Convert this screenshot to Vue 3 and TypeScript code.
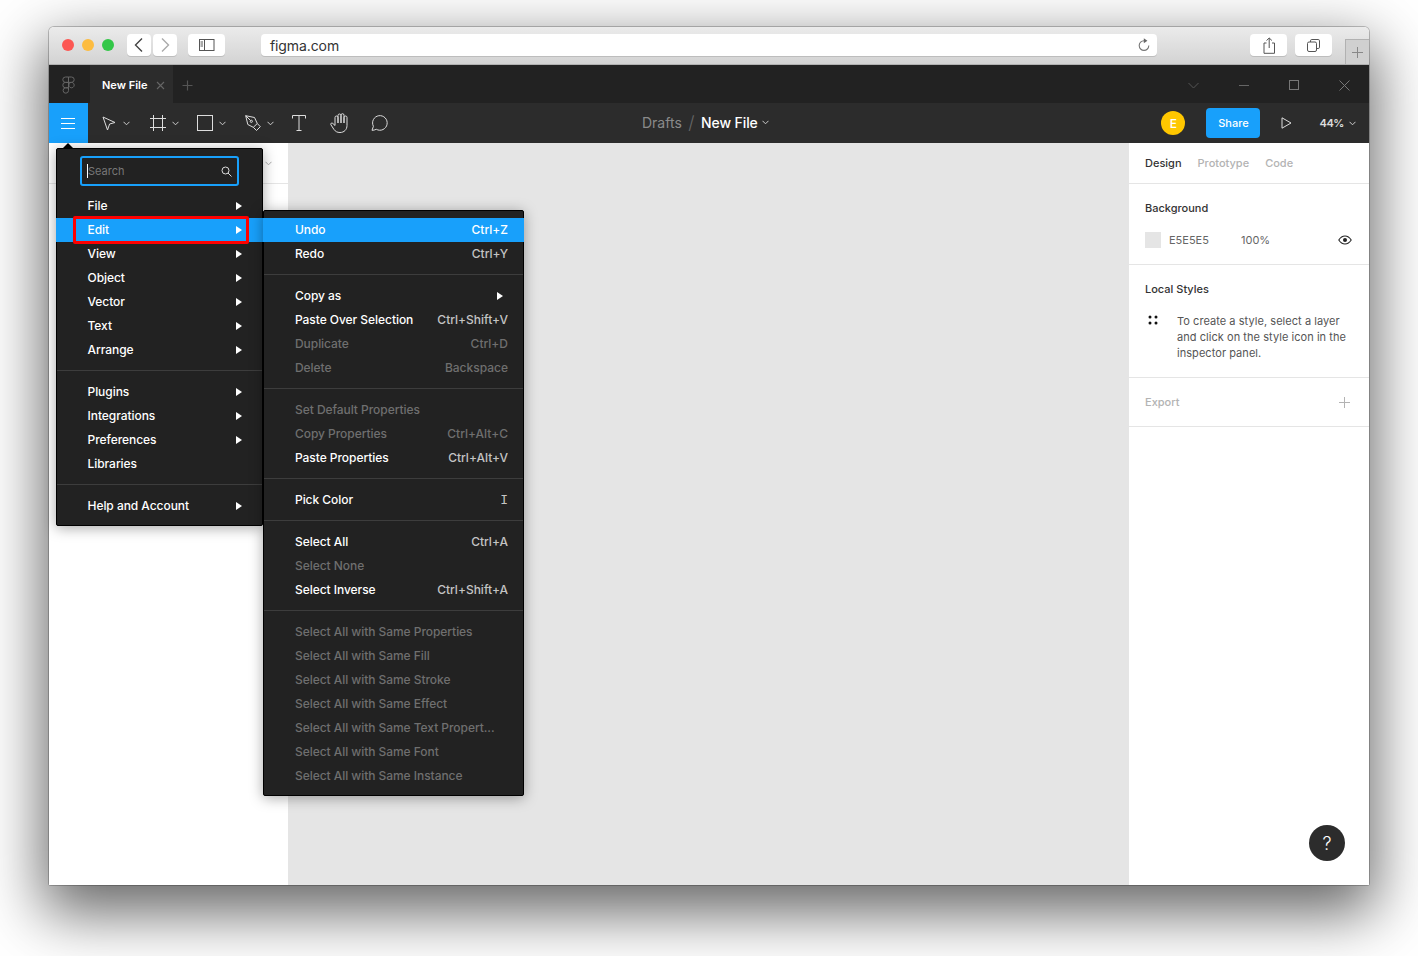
<script setup lang="ts">
interface MenuItem {
  label: string
  shortcut?: string
  arrow?: boolean
  disabled?: boolean
  active?: boolean
}

const mainMenu: MenuItem[][] = [
  [
    { label: 'File', arrow: true },
    { label: 'Edit', arrow: true, active: true },
    { label: 'View', arrow: true },
    { label: 'Object', arrow: true },
    { label: 'Vector', arrow: true },
    { label: 'Text', arrow: true },
    { label: 'Arrange', arrow: true },
  ],
  [
    { label: 'Plugins', arrow: true },
    { label: 'Integrations', arrow: true },
    { label: 'Preferences', arrow: true },
    { label: 'Libraries' },
  ],
  [{ label: 'Help and Account', arrow: true }],
]

const editMenu: MenuItem[][] = [
  [
    { label: 'Undo', shortcut: 'Ctrl+Z', active: true },
    { label: 'Redo', shortcut: 'Ctrl+Y' },
  ],
  [
    { label: 'Copy as', arrow: true },
    { label: 'Paste Over Selection', shortcut: 'Ctrl+Shift+V' },
    { label: 'Duplicate', shortcut: 'Ctrl+D', disabled: true },
    { label: 'Delete', shortcut: 'Backspace', disabled: true },
  ],
  [
    { label: 'Set Default Properties', disabled: true },
    { label: 'Copy Properties', shortcut: 'Ctrl+Alt+C', disabled: true },
    { label: 'Paste Properties', shortcut: 'Ctrl+Alt+V' },
  ],
  [{ label: 'Pick Color', shortcut: 'I' }],
  [
    { label: 'Select All', shortcut: 'Ctrl+A' },
    { label: 'Select None', disabled: true },
    { label: 'Select Inverse', shortcut: 'Ctrl+Shift+A' },
  ],
  [
    { label: 'Select All with Same Properties', disabled: true },
    { label: 'Select All with Same Fill', disabled: true },
    { label: 'Select All with Same Stroke', disabled: true },
    { label: 'Select All with Same Effect', disabled: true },
    { label: 'Select All with Same Text Propert...', disabled: true },
    { label: 'Select All with Same Font', disabled: true },
    { label: 'Select All with Same Instance', disabled: true },
  ],
]
</script>

<template>
  <div class="page">
    <div class="window">
      <header class="safari">
        <div class="lights">
          <span class="light red"></span>
          <span class="light yellow"></span>
          <span class="light green"></span>
        </div>
        <div class="nav-pair">
          <button class="s-btn nav">
            <svg width="10" height="16" viewBox="0 0 10 16"><path d="M8 1.500 1.500 8 8 14.500" fill="none" stroke="#444" stroke-width="1.400" /></svg>
          </button>
          <button class="s-btn nav">
            <svg width="10" height="16" viewBox="0 0 10 16"><path d="M2 1.500 8.500 8 2 14.500" fill="none" stroke="#aaa" stroke-width="1.400" /></svg>
          </button>
        </div>
        <button class="s-btn side">
          <svg width="16" height="12" viewBox="0 0 16 12" fill="none" stroke="#555"><rect x="0.500" y="0.500" width="14.500" height="11" /><path d="M5.500 0.500v11M1.500 3h2.500M1.500 5h2.500M1.500 7h2.500" /></svg>
        </button>
        <div class="url">
          <span>figma.com</span>
          <svg width="14" height="14" viewBox="0 0 14 14" fill="none"><path d="M7 2.800a4.800 4.800 0 1 0 4.800 4.800" stroke="#777" stroke-width="1.100" /><path d="M6.800 0.300 10.400 2.800 6.800 5.300z" fill="#666" /></svg>
        </div>
        <button class="s-btn right-btn first">
          <svg width="12" height="17" viewBox="0 0 12 17" fill="none" stroke="#555"><path d="M3.500 6H1v10.300h10.500V6H9M6.200 11V1M3.500 3.500 6.200 1l2.700 2.500" /></svg>
        </button>
        <button class="s-btn right-btn">
          <svg width="13" height="13" viewBox="0 0 13 13" fill="none" stroke="#555"><rect x="0.500" y="3" width="9" height="9.500" rx="1.500" /><path d="M3.500 3V1.800A1.300 1.300 0 0 1 4.800 0.500h6.400a1.300 1.300 0 0 1 1.300 1.300v6.400A1.300 1.300 0 0 1 11.200 9.500H9.500" /></svg>
        </button>
        <div class="new-tab">
          <svg width="13" height="13" viewBox="0 0 13 13"><path d="M6.500 1v11M1 6.500h11" stroke="#888" /></svg>
        </div>
      </header>

      <div class="tabbar">
        <div class="logo-cell">
          <svg width="13" height="18" viewBox="0 0 13 18" fill="none" stroke="#666"><path d="M6.500 1H3.500a2.700 2.700 0 0 0 0 5.400h3zM6.500 1h3a2.700 2.700 0 0 1 0 5.400h-3zM6.500 6.400h-3a2.700 2.700 0 0 0 0 5.400h3zM9.500 6.400a2.700 2.700 0 1 1 -0.010 0zM6.500 11.800h-3a2.700 2.700 0 1 0 3 2.700z" /></svg>
        </div>
        <div class="file-tab">
          <span class="file-name">New File</span>
          <svg width="9" height="9" viewBox="0 0 9 9"><path d="M1 1l7 7M8 1 1 8" stroke="#666" stroke-width="1.100" /></svg>
        </div>
        <svg class="add-tab" width="11" height="11" viewBox="0 0 11 11"><path d="M5.500 0.500v10M0.500 5.500h10" stroke="#555" stroke-width="1.200" /></svg>
        <div class="win-controls">
          <svg width="11" height="7" viewBox="0 0 11 7"><path d="M0.500 1 5.500 6l5-5" fill="none" stroke="#555" /></svg>
          <svg width="10" height="10" viewBox="0 0 10 10"><path d="M0 5.500h10" stroke="#666" /></svg>
          <svg width="10" height="10" viewBox="0 0 10 10"><rect x="0.500" y="0.500" width="9" height="9" fill="none" stroke="#777" /></svg>
          <svg width="11" height="11" viewBox="0 0 11 11"><path d="M0.500 0.500l10 10M10.500 0.500l-10 10" stroke="#777" /></svg>
        </div>
      </div>

      <div class="toolbar">
        <button class="hamburger">
          <svg width="14" height="11" viewBox="0 0 14 11"><path d="M0 0.500h14M0 5.500h14M0 10.500h14" stroke="#fff" /></svg>
        </button>
        <div class="tools">
          <span class="tool t-move">
            <svg width="14" height="15" viewBox="0 0 14 15"><path d="M1 1l12 5.500-5.400 1.500L5.500 14z" fill="none" stroke="#ddd" /></svg>
            <svg class="chev" width="7" height="5" viewBox="0 0 7 5"><path d="M0.500 0.800 3.500 3.800l3-3" fill="none" stroke="#ccc" /></svg>
          </span>
          <span class="tool t-frame">
            <svg width="16" height="16" viewBox="0 0 16 16"><path d="M3.500 0v16M12.500 0v16M0 3.500h16M0 12.500h16" stroke="#ddd" /></svg>
            <svg class="chev" width="7" height="5" viewBox="0 0 7 5"><path d="M0.500 0.800 3.500 3.800l3-3" fill="none" stroke="#ccc" /></svg>
          </span>
          <span class="tool t-rect">
            <svg width="16" height="16" viewBox="0 0 16 16"><rect x="0.500" y="0.500" width="15" height="15" fill="none" stroke="#ddd" /></svg>
            <svg class="chev" width="7" height="5" viewBox="0 0 7 5"><path d="M0.500 0.800 3.500 3.800l3-3" fill="none" stroke="#ccc" /></svg>
          </span>
          <span class="tool t-pen">
            <svg width="16" height="16" viewBox="0 0 16 16" fill="none" stroke="#ddd"><path d="M0.700 0.700 9.500 2.500l2.800 6-4 3.800L2.800 9.500z" /><path d="M12.300 8.500l3 3.200-3.800 3.800-3.200-3.200" /><circle cx="6.300" cy="6.300" r="1.100" /><path d="M0.700 0.700 5.500 5.500" /></svg>
            <svg class="chev" width="7" height="5" viewBox="0 0 7 5"><path d="M0.500 0.800 3.500 3.800l3-3" fill="none" stroke="#ccc" /></svg>
          </span>
          <span class="tool t-text">
            <svg width="14" height="16" viewBox="0 0 14 16" fill="none" stroke="#ddd"><path d="M0.500 3.500v-3h13v3M7 0.500v15M4.500 15.500h5" /></svg>
          </span>
          <span class="tool t-hand">
            <svg width="18" height="20" viewBox="0 0 18 20" fill="none" stroke="#ddd"><path d="M5 12.500V4.500a1.500 1.500 0 0 1 3 0V10M8 10V2.500a1.500 1.500 0 0 1 3 0V10M11 10V2.200a1.500 1.500 0 0 1 3 0V10M14 10V4.500a1.500 1.500 0 0 1 3 0v8c0 4-2.800 7-7 7-2.800 0-4.500-1-6-3L.9 11.800c-.8-1.300 1-2.500 2-1.300L5 12.500" /></svg>
          </span>
          <span class="tool t-comment">
            <svg width="18" height="17" viewBox="0 0 18 17" fill="none" stroke="#ddd"><path d="M1 16.300 2.400 12.300A7.300 7.300 0 1 1 5.300 15.300C3.800 16 2.500 16.300 1 16.300z" /></svg>
          </span>
        </div>
        <div class="crumbs">
          <span class="crumb-dim">Drafts</span>
          <span class="crumb-sep">/</span>
          <span class="crumb-file">New File</span>
          <svg width="7" height="5" viewBox="0 0 7 5"><path d="M0.500 0.800 3.500 3.800l3-3" fill="none" stroke="#ccc" /></svg>
        </div>
        <div class="tb-right">
          <span class="avatar">E</span>
          <button class="share">Share</button>
          <svg class="play" width="11" height="12" viewBox="0 0 11 12"><path d="M1 0.800v10.400L10 6z" fill="none" stroke="#ddd" /></svg>
          <span class="zoom">44%</span>
          <svg class="zoom-chev" width="7" height="5" viewBox="0 0 7 5"><path d="M0.500 0.800 3.500 3.800l3-3" fill="none" stroke="#ccc" /></svg>
        </div>
      </div>

      <div class="workspace">
        <aside class="left-panel">
          <div class="left-head">
            <svg width="7" height="5" viewBox="0 0 7 5"><path d="M0.500 0.800 3.500 3.800l3-3" fill="none" stroke="#aaa" /></svg>
          </div>
        </aside>
        <main class="canvas"></main>
        <aside class="right-panel">
          <div class="r-tabs">
            <span class="r-tab on">Design</span>
            <span class="r-tab">Prototype</span>
            <span class="r-tab">Code</span>
          </div>
          <section class="r-bg">
            <h3>Background</h3>
            <div class="bg-row">
              <span class="swatch"></span>
              <span class="hex">E5E5E5</span>
              <span class="pct">100%</span>
              <svg width="14" height="10" viewBox="0 0 14 10"><path d="M0.800 5C2.500 2.300 4.600 1 7 1s4.500 1.300 6.200 4C11.500 7.700 9.400 9 7 9S2.500 7.700 0.800 5z" fill="none" stroke="#222" stroke-width="1.100" /><circle cx="7" cy="5" r="2" fill="#222" /></svg>
            </div>
          </section>
          <section class="r-styles">
            <h3>Local Styles</h3>
            <div class="styles-row">
              <svg width="10" height="10" viewBox="0 0 10 10" fill="#111"><circle cx="2" cy="2" r="1.500" /><circle cx="8" cy="2" r="1.500" /><circle cx="2" cy="8" r="1.500" /><circle cx="8" cy="8" r="1.500" /></svg>
              <p>To create a style, select a layer and click on the style icon in the inspector panel.</p>
            </div>
          </section>
          <section class="r-export">
            <h3>Export</h3>
            <svg width="11" height="11" viewBox="0 0 11 11"><path d="M5.500 0v11M0 5.500h11" stroke="#b3b3b3" /></svg>
          </section>
          <div class="help">?</div>
        </aside>
      </div>

      <div class="menu-tip"></div>
      <nav class="menu main-menu">
        <div class="search">
          <span class="caret"></span>
          <span class="search-ph">Search</span>
          <svg width="11" height="11" viewBox="0 0 11 11" fill="none" stroke="#ddd"><circle cx="4.500" cy="4.500" r="3.500" /><path d="M7 7l3.500 3.500" /></svg>
        </div>
        <div class="groups">
          <div v-for="(group, g) in mainMenu" :key="g" class="group">
            <div v-for="item in group" :key="item.label" class="row" :class="{ active: item.active }">
              <span>{{ item.label }}</span>
              <i v-if="item.arrow" class="arrow"></i>
            </div>
          </div>
        </div>
        <div class="red-mark"></div>
      </nav>

      <nav class="menu edit-menu">
        <div v-for="(group, g) in editMenu" :key="g" class="group">
          <div v-for="item in group" :key="item.label" class="row" :class="{ active: item.active, off: item.disabled }">
            <span>{{ item.label }}</span>
            <span v-if="item.shortcut" class="key" :class="{ mono: item.shortcut === 'I' }">{{ item.shortcut }}</span>
            <i v-if="item.arrow" class="arrow"></i>
          </div>
        </div>
      </nav>
    </div>
  </div>
</template>

<style>
html,
body {
  margin: 0;
  background: #fff;
}
</style>

<style scoped>
.page {
  height: 956px;
  width: 1418px;
  padding: 27px 49px 0;
  box-sizing: border-box;
  overflow: hidden;
  font-family: Inter, "Liberation Sans", sans-serif;
  font-size: 12px;
}

.window {
  position: relative;
  width: 1320px;
  height: 858px;
  border-radius: 5px 5px 2px 2px;
  box-shadow: 0 0 0 1px rgba(0, 0, 0, 0.22), 0 22px 60px 6px rgba(0, 0, 0, 0.6);
  display: flex;
  flex-direction: column;
  background: #fff;
}

button {
  border: 0;
  padding: 0;
  font: inherit;
}

.safari {
  height: 38px;
  flex: none;
  display: flex;
  align-items: center;
  padding: 0 0 0 13px;
  box-sizing: border-box;
  background: linear-gradient(#ebebeb, #d3d3d3);
  border-bottom: 1px solid #b1b1b1;
  border-radius: 5px 5px 0 0;
}

.lights {
  display: flex;
  gap: 8px;
  margin-right: 13px;
  margin-top: -2px;
}

.light {
  width: 12px;
  height: 12px;
  border-radius: 50%;
}

.red { background: #fc5753; }
.yellow { background: #fdbc40; }
.green { background: #33c748; }

.s-btn {
  height: 22px;
  margin-top: -1px;
  background: #fff;
  border-radius: 4px;
  box-shadow: 0 1px 0 #bdbdbd;
  display: flex;
  align-items: center;
  justify-content: center;
}

.nav-pair {
  display: flex;
  gap: 2px;
  margin-right: 11px;
}

.nav { width: 24px; }
.side { width: 37px; margin-right: 36px; }

.url {
  width: 896px;
  height: 22px;
  margin-top: -1px;
  background: #fff;
  border-radius: 4px;
  box-shadow: 0 1px 0 #bdbdbd;
  display: flex;
  align-items: center;
  justify-content: space-between;
  padding: 0 6px 0 9px;
  box-sizing: border-box;
  font-size: 14px;
  letter-spacing: -0.1px;
  color: #333;
  margin-right: 93px;
}

.right-btn { width: 37px; }
.right-btn.first { margin-right: 8px; }

.new-tab {
  width: 24px;
  height: 25px;
  margin-left: 13px;
  align-self: flex-end;
  border: 1px solid #b1b1b1;
  border-width: 1px 0 0 1px;
  box-sizing: border-box;
  background: #d0d0d0;
  display: flex;
  align-items: center;
  justify-content: center;
}

.tabbar {
  height: 38px;
  flex: none;
  display: flex;
  align-items: center;
  background: #222;
}

.logo-cell {
  width: 41px;
  display: flex;
  justify-content: center;
  padding-right: 2px;
  box-sizing: border-box;
  margin-top: 2px;
}

.file-tab {
  width: 83px;
  height: 38px;
  background: #2c2c2c;
  display: flex;
  align-items: center;
  gap: 9px;
  padding: 2px 0 0 12px;
  box-sizing: border-box;
  color: #fff;
}

.file-name {
  font-size: 11px;
  font-weight: 600;
}

.add-tab {
  margin: 2px 0 0 9px;
}

.win-controls {
  margin: 2px 0 0 auto;
  display: flex;
  align-items: center;
  gap: 40px;
  padding-right: 19px;
}

.toolbar {
  height: 40px;
  flex: none;
  display: flex;
  align-items: center;
  background: #2c2c2c;
  position: relative;
}

.hamburger {
  width: 39px;
  height: 40px;
  background: #18a0fb;
  display: flex;
  align-items: center;
  justify-content: center;
  padding-right: 1px;
}

.tools {
  display: flex;
  align-items: center;
  color: #ddd;
}

.tool {
  display: flex;
  align-items: center;
  gap: 7px;
}

.tool svg {
  display: block;
}

.t-move { margin-left: 14px; }
.t-frame { margin-left: 20px; gap: 6px; }
.t-rect { margin-left: 18px; gap: 6px; }
.t-pen { margin-left: 19px; gap: 6px; }
.t-text { margin-left: 18px; }
.t-hand { margin-left: 24px; }
.t-comment { margin-left: 23px; margin-top: -2px; }

.crumbs {
  position: absolute;
  left: 593px;
  top: 0;
  height: 40px;
  padding-bottom: 2px;
  box-sizing: border-box;
  display: flex;
  align-items: center;
  font-size: 14px;
}

.crumb-dim { color: #8a8a8a; }
.crumb-sep { color: #666; margin: 0 6.500px; font-size: 18px; font-weight: 300; }
.crumb-file { color: #fff; font-weight: 500; letter-spacing: -0.1px; margin-right: 4px; }

.tb-right {
  margin-left: auto;
  display: flex;
  align-items: center;
  padding-right: 13px;
}

.avatar {
  width: 24px;
  height: 24px;
  border-radius: 50%;
  background: #ffc700;
  color: #fff;
  display: flex;
  align-items: center;
  justify-content: center;
  font-weight: 500;
  margin-right: 21px;
}

.share {
  width: 54px;
  height: 30px;
  border-radius: 4px;
  background: #18a0fb;
  color: #fff;
  font-size: 11px;
  font-weight: 500;
  margin-right: 21px;
}

.play { margin-right: 27px; }

.zoom {
  color: #ddd;
  font-size: 11px;
  font-weight: 600;
  letter-spacing: -0.4px;
  margin-right: 5px;
}

.workspace {
  flex: 1;
  display: flex;
  min-height: 0;
}

.left-panel {
  width: 239px;
  background: #fff;
  flex: none;
}

.left-head {
  height: 41px;
  border-bottom: 1px solid #e5e5e5;
  display: flex;
  align-items: center;
  justify-content: flex-end;
  padding-right: 16px;
  box-sizing: border-box;
}

.canvas {
  flex: 1;
  background: #e5e5e5;
}

.right-panel {
  width: 240px;
  flex: none;
  background: #fff;
  position: relative;
  color: #333;
  font-size: 11px;
}

h3 {
  margin: 0;
  font-size: 11px;
  font-weight: 500;
  color: #333;
}

.r-tabs {
  height: 41px;
  border-bottom: 1px solid #e5e5e5;
  box-sizing: border-box;
  display: flex;
  align-items: center;
  gap: 16px;
  padding-left: 16px;
}

.r-tab {
  color: #b3b3b3;
  font-weight: 500;
}

.r-tab.on { color: #333; }

.r-bg {
  height: 81px;
  box-sizing: border-box;
  border-bottom: 1px solid #e5e5e5;
  padding: 17px 17px 0 16px;
}

.r-bg h3 { line-height: 14px; }

.bg-row {
  display: flex;
  align-items: center;
  margin-top: 17px;
  color: #666;
}

.swatch {
  width: 16px;
  height: 16px;
  background: #e5e5e5;
  margin-right: 8px;
}

.hex { width: 72px; }
.pct { flex: 1; }

.r-styles {
  height: 113px;
  box-sizing: border-box;
  border-bottom: 1px solid #e5e5e5;
  padding: 17px 16px 0;
}

.r-styles h3 { line-height: 14px; }

.styles-row {
  display: flex;
  margin-top: 17px;
}

.styles-row svg {
  margin: 2px 19px 0 3px;
  flex: none;
}

.styles-row p {
  margin: 0 -4px 0 0;
  line-height: 16px;
  color: #555;
  letter-spacing: 0.05px;
}

.r-export {
  height: 49px;
  box-sizing: border-box;
  border-bottom: 1px solid #e5e5e5;
  display: flex;
  align-items: center;
  justify-content: space-between;
  padding: 0 19px 0 16px;
}

.r-export h3 { color: #b3b3b3; }

.help {
  position: absolute;
  right: 24px;
  bottom: 24px;
  width: 36px;
  height: 36px;
  border-radius: 50%;
  background: #2c2c2c;
  color: #fff;
  font-size: 18px;
  font-weight: 300;
  display: flex;
  align-items: center;
  justify-content: center;
}

.menu-tip {
  position: absolute;
  left: 13px;
  top: 116px;
  width: 0;
  height: 0;
  border: 6px solid transparent;
  border-top: 0;
  border-bottom: 6px solid #000;
}

.menu {
  position: absolute;
  background: #222;
  box-sizing: border-box;
  border: 1px solid #000;
  box-shadow: 0 2px 14px rgba(0, 0, 0, 0.35);
  border-radius: 2px;
  color: #fff;
}

.main-menu {
  left: 7px;
  top: 121px;
  width: 207px;
  height: 378px;
}

.edit-menu {
  left: 214px;
  top: 183px;
  width: 261px;
  height: 586px;
}

.search {
  position: absolute;
  left: 23px;
  top: 7px;
  width: 159px;
  height: 30px;
  box-sizing: border-box;
  border: 2px solid #18a0fb;
  border-radius: 3px;
  display: flex;
  align-items: center;
  justify-content: space-between;
  padding: 0 5px 0 6px;
}

.caret {
  position: absolute;
  left: 5px;
  top: 6px;
  width: 1px;
  height: 14px;
  background: #fff;
}

.search-ph {
  color: #777;
  font-size: 11px;
}

.groups {
  padding-top: 38px;
}

.group {
  padding: 9px 0 8px;
  border-bottom: 1px solid #3d3d3d;
}

.group:first-child {
  padding-top: 7px;
}

.group:last-child {
  border-bottom: 0;
}

.row {
  height: 24px;
  box-sizing: border-box;
  display: flex;
  align-items: center;
  justify-content: space-between;
  position: relative;
  font-weight: 500;
  letter-spacing: -0.05px;
  white-space: nowrap;
  padding: 0 16px 2px 31px;
}

.main-menu .row {
  padding-left: 30.500px;
}

.edit-menu .row {
  padding-right: 15px;
}

.row.active {
  background: #18a0fb;
  margin: 0 -1px;
}

.edit-menu .row.active {
  padding-left: 32px;
  padding-right: 16px;
}

.main-menu .row.active {
  padding-left: 31.500px;
  padding-right: 17px;
}

.row.off,
.row.off .key {
  color: #6f6f6f;
}

.key {
  color: #c4c4c4;
  font-weight: 500;
  letter-spacing: 0;
}

.key.mono {
  font-family: "Liberation Mono", monospace;
  font-size: 13px;
  font-weight: 400;
  margin-top: 2px;
}

.row.active .key {
  color: #fff;
}

.arrow {
  width: 0;
  height: 0;
  border-left: 6px solid #fff;
  border-top: 4px solid transparent;
  border-bottom: 4px solid transparent;
  margin: 2px 4px 0 0;
}

.edit-menu .arrow {
  margin-right: 5px;
}

.red-mark {
  position: absolute;
  left: 16px;
  top: 67px;
  width: 176px;
  height: 28px;
  box-sizing: border-box;
  border: 3px solid #f00;
  border-radius: 2px;
}
</style>
